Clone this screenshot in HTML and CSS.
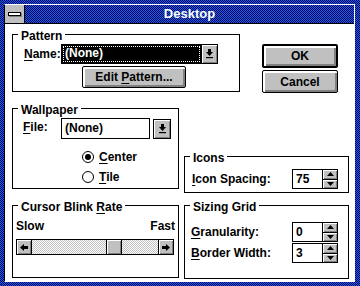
FILE: index.html
```html
<!DOCTYPE html>
<html lang="en">
  <head>
    <meta charset="UTF-8" />
    <title>Desktop</title>
    <link rel="stylesheet" href="styles.css">
  </head>
  <body>
    <div class="window">
      <div class="frame">
        <div class="titlebar">
          <div class="sysmenu"><span class="sysbar"></span></div>
          <div class="title">Desktop</div>
        </div>

        <div class="client">
          <div class="row row-top">
            <div class="group pattern-group">
              <span class="legend">Pattern</span>
              <div class="field name-field">
                <span class="label name-label"><u>N</u>ame:</span>
                <div class="combo">
                  <div class="combo-value selected"><span class="focus">(None)</span></div>
                  <div class="drop-btn">
                    <svg width="7" height="10" viewBox="0 0 7 10"><path d="M2 0h3v3h2L3.5 7 0 3h2z" /><rect y="8" width="7" height="1.2" /></svg>
                  </div>
                </div>
              </div>
              <button class="btn edit-btn">Edit <u>P</u>attern...</button>
            </div>

            <div class="dialog-buttons">
              <button class="btn default-btn">OK</button>
              <button class="btn cancel-btn">Cancel</button>
            </div>
          </div>

          <div class="row row-mid">
            <div class="group wallpaper-group">
              <span class="legend">Wallpaper</span>
              <div class="field file-field">
                <span class="label file-label"><u>F</u>ile:</span>
                <div class="textbox file-box">(None)</div>
                <div class="drop-btn single">
                  <svg width="7" height="10" viewBox="0 0 7 10"><path d="M2 0h3v3h2L3.5 7 0 3h2z" /><rect y="8" width="7" height="1.2" /></svg>
                </div>
              </div>
              <div class="radio first-radio">
                <svg width="12" height="12" viewBox="0 0 12 12"><circle cx="6" cy="6" r="5.5" fill="#fff" stroke="#000" /><circle cx="6" cy="6" r="3" /></svg>
                <span><u>C</u>enter</span>
              </div>
              <div class="radio">
                <svg width="12" height="12" viewBox="0 0 12 12"><circle cx="6" cy="6" r="5.5" fill="#fff" stroke="#000" /></svg>
                <span><u>T</u>ile</span>
              </div>
            </div>

            <div class="group icons-group">
              <span class="legend">Icons</span>
              <div class="field spin-field">
                <span class="label"><u>I</u>con Spacing:</span>
                <div class="spin">
                  <div class="textbox spin-box">75</div>
                  <div class="spin-arrows">
                    <div class="spin-btn"><svg width="7" height="4" viewBox="0 0 7 4"><path d="M0 4L3.5 0 7 4z" /></svg></div>
                    <div class="spin-btn"><svg width="7" height="4" viewBox="0 0 7 4"><path d="M0 0h7L3.5 4z" /></svg></div>
                  </div>
                </div>
              </div>
            </div>
          </div>

          <div class="row row-bot">
            <div class="group cursor-group">
              <span class="legend">Cursor Blink <u>R</u>ate</span>
              <div class="speed-labels">
                <span>Slow</span>
                <span>Fast</span>
              </div>
              <div class="scrollbar">
                <div class="scroll-btn">
                  <svg width="8" height="7" viewBox="0 0 8 7"><path d="M0 3.5L4 0v2h4v3H4v2z" /></svg>
                </div>
                <div class="track"></div>
                <div class="thumb"></div>
                <div class="track short"></div>
                <div class="scroll-btn">
                  <svg width="8" height="7" viewBox="0 0 8 7"><path d="M8 3.5L4 0v2H0v3h4v2z" /></svg>
                </div>
              </div>
            </div>

            <div class="group sizing-group">
              <span class="legend">Sizing Grid</span>
              <div class="field spin-field first-spin">
                <span class="label"><u>G</u>ranularity:</span>
                <div class="spin">
                  <div class="textbox spin-box">0</div>
                  <div class="spin-arrows">
                    <div class="spin-btn"><svg width="7" height="4" viewBox="0 0 7 4"><path d="M0 4L3.5 0 7 4z" /></svg></div>
                    <div class="spin-btn"><svg width="7" height="4" viewBox="0 0 7 4"><path d="M0 0h7L3.5 4z" /></svg></div>
                  </div>
                </div>
              </div>
              <div class="field spin-field second-spin">
                <span class="label"><u>B</u>order Width:</span>
                <div class="spin">
                  <div class="textbox spin-box">3</div>
                  <div class="spin-arrows">
                    <div class="spin-btn"><svg width="7" height="4" viewBox="0 0 7 4"><path d="M0 4L3.5 0 7 4z" /></svg></div>
                    <div class="spin-btn"><svg width="7" height="4" viewBox="0 0 7 4"><path d="M0 0h7L3.5 4z" /></svg></div>
                  </div>
                </div>
              </div>
            </div>
          </div>
        </div>
      </div>
    </div>
  </body>
</html>
```

FILE: styles.css
```css
* {
  margin: 0;
  padding: 0;
  box-sizing: border-box;
}

body {
  font-family: "Liberation Sans", Arial, sans-serif;
  font-size: 12px;
  font-weight: bold;
  line-height: 14px;
  color: #000;
  background: #fff;
}

u {
  text-decoration: underline;
  text-decoration-thickness: 1px;
  text-underline-offset: 2px;
}

/* window frame */

.window {
  width: 360px;
  height: 286px;
  padding: 4px 5px 4px 4px;
  background: repeating-conic-gradient(#1f5fd8 0 25%, #00006e 0 50%) 0 0 / 2px 2px;
}

.frame {
  height: 100%;
  display: flex;
  flex-direction: column;
  border-top: 1px solid #fff;
  border-right: 1px solid #fff;
  border-bottom: 1px solid #fff;
  border-left: 1px solid #000;
}

.titlebar {
  height: 19px;
  display: flex;
  border-bottom: 1px solid #000;
  background: repeating-conic-gradient(#1f5fd8 0 25%, #00006e 0 50%) 0 0 / 2px 2px;
}

.sysmenu {
  width: 20px;
  background: #c0c0c0;
  border-right: 1px solid #000;
  display: flex;
  align-items: center;
  justify-content: center;
}

.sysbar {
  width: 13px;
  height: 4px;
  background: #fff;
  border: 1px solid #000;
  box-shadow: 1px 1px 0 #808080;
}

.title {
  flex: 1;
  text-align: center;
  color: #fff;
  font-size: 13px;
  line-height: 18px;
}

.client {
  flex: 1;
  background: #fff;
  padding-left: 7px;
}

/* layout rows */

.row {
  display: flex;
  align-items: flex-start;
}

.row-top {
  margin-top: 10px;
}

.row-mid {
  margin-top: 15px;
  gap: 5px;
}

.row-bot {
  margin-top: 12px;
  gap: 5px;
}

/* group boxes */

.group {
  display: flex;
  flex-direction: column;
  border: 1px solid #000;
}

.legend {
  align-self: flex-start;
  margin: -6px 0 0 5px;
  padding: 0 3px;
  background: #fff;
}

.pattern-group {
  width: 228px;
  height: 58px;
}

.wallpaper-group {
  width: 167px;
  height: 81px;
}

.icons-group {
  width: 165px;
  height: 37px;
  margin-top: 48px;
}

.cursor-group {
  width: 167px;
  height: 73px;
}

.sizing-group {
  width: 165px;
  height: 74px;
}

.field {
  display: flex;
  align-items: center;
}

/* pattern */

.name-field {
  margin: 1px 0 0 11px;
  height: 20px;
}

.name-label {
  width: 37px;
}

.combo {
  width: 157px;
  height: 20px;
  display: flex;
  border: 1px solid #000;
}

.combo-value {
  flex: 1;
  padding: 1px;
}

.selected {
  background: #000;
  color: #fff;
}

.focus {
  display: block;
  height: 100%;
  padding-left: 2px;
  line-height: 15px;
  outline: 1px dotted #fff;
  outline-offset: -1px;
}

.drop-btn {
  width: 16px;
  display: flex;
  align-items: center;
  justify-content: center;
  border-left: 1px solid #000;
  background: #c0c0c0;
  box-shadow: inset 1px 1px #fff, inset -1px -1px #808080;
}

.drop-btn.single {
  width: 18px;
  height: 20px;
  margin-left: 3px;
  border: 1px solid #000;
}

.btn {
  font: inherit;
  color: #000;
  background: #c0c0c0;
  border: 1px solid #000;
  border-radius: 2px;
  box-shadow: inset 2px 2px #fff, inset -2px -2px #808080;
  cursor: pointer;
}

.edit-btn {
  width: 104px;
  height: 22px;
  margin: 2px 0 0 69px;
}

.dialog-buttons {
  display: flex;
  flex-direction: column;
  gap: 2px;
  margin: 10px 0 0 22px;
}

.dialog-buttons .btn {
  width: 76px;
  height: 23px;
}

.dialog-buttons .default-btn {
  height: 24px;
  border-width: 2px;
}

/* wallpaper */

.file-field {
  margin: 1px 0 0 10px;
}

.file-label {
  width: 38px;
  align-self: flex-start;
  margin-top: 2px;
}

.textbox {
  height: 20px;
  border: 1px solid #000;
  padding-left: 3px;
  line-height: 18px;
}

.file-box {
  width: 89px;
  height: 21px;
}

.radio {
  display: flex;
  align-items: center;
  gap: 5px;
  height: 20px;
  margin-left: 69px;
}

.first-radio {
  margin-top: 8px;
}

/* spin fields */

.spin-field {
  justify-content: space-between;
  padding-right: 10px;
}

.icons-group .spin-field {
  margin: 4px 0 0 7px;
}

.sizing-group .spin-field {
  margin-left: 6px;
}

.first-spin {
  margin-top: 8px;
}

.second-spin {
  margin-top: 1px;
}

.spin {
  display: flex;
}

.spin-box {
  width: 31px;
}

.spin-arrows {
  width: 15px;
  height: 20px;
  display: flex;
  flex-direction: column;
  border: 1px solid #000;
  border-left: none;
}

.spin-btn {
  flex: 1;
  display: flex;
  align-items: center;
  justify-content: center;
  background: #c0c0c0;
  box-shadow: inset 1px 1px #fff, inset -1px -1px #808080;
}

.spin-btn + .spin-btn {
  border-top: 1px solid #000;
}

/* cursor blink */

.speed-labels {
  display: flex;
  justify-content: space-between;
  margin: 5px 3px 0 3px;
}

.scrollbar {
  display: flex;
  width: 158px;
  height: 16px;
  margin: 6px 0 0 3px;
  border: 1px solid #000;
}

.scroll-btn {
  width: 15px;
  display: flex;
  align-items: center;
  justify-content: center;
  background: #c0c0c0;
  box-shadow: inset 1px 1px #fff, inset -1px -1px #808080;
}

.scroll-btn:first-child {
  border-right: 1px solid #000;
}

.scroll-btn:last-child {
  border-left: 1px solid #000;
}

.track {
  flex: 1;
  background: repeating-conic-gradient(#fff 0 25%, #c0c0c0 0 50%) 0 0 / 2px 2px;
}

.track.short {
  flex: 0 0 36px;
}

.thumb {
  width: 16px;
  background: #c0c0c0;
  border-left: 1px solid #000;
  border-right: 1px solid #000;
  box-shadow: inset 1px 1px #fff, inset -1px -1px #808080;
}
```
